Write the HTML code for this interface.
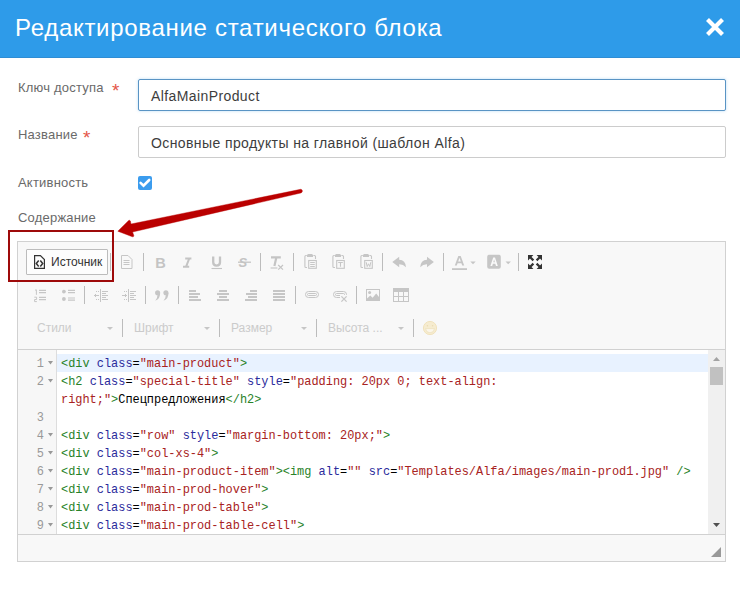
<!DOCTYPE html>
<html><head><meta charset="utf-8">
<style>
*{box-sizing:border-box}
html,body{margin:0;padding:0;width:740px;height:597px;overflow:hidden;background:#fff;font-family:"Liberation Sans",sans-serif;position:relative}
.abs{position:absolute}
#hdr{left:0;top:0;width:740px;height:58px;background:#2e9be9;border-bottom:1px solid #2f8dd4}
#title{left:15px;top:0;height:58px;line-height:56px;color:#fff;font-size:24px;letter-spacing:0.7px;white-space:nowrap}
.lbl{left:18px;color:#6a6a6a;font-size:13px;letter-spacing:0.2px;white-space:nowrap;line-height:16px}
.star{color:#e45549;font-size:19px;line-height:20px}
.inp{left:138px;width:588px;height:32px;border:1px solid #ccc;border-radius:2px;background:#fff}
.inp span{position:absolute;left:12px;top:1px;line-height:30px;font-size:14px;color:#3d3d3d;letter-spacing:0.4px;white-space:nowrap}
#ed{left:17px;top:241px;width:709px;height:321px;border:1px solid #d1d1d1;background:#f8f8f8}
#code{left:17px;top:349px;width:709px;height:186px;background:#fff;border:1px solid #d1d1d1;border-top-color:#d1d1d1}
#gut{left:18px;top:350px;width:39px;height:184px;background:#f7f7f7;border-right:1px solid #ddd}
#hl{left:57px;top:354px;width:651px;height:18px;background:#e8f2ff}
#sb{left:708px;top:350px;width:17px;height:184px;background:#f0f0f0}
.ln{position:absolute;left:18px;width:26px;text-align:right;font:11.93px "Liberation Mono",monospace;color:#999;line-height:18px;padding-top:1px}
.cl{position:absolute;left:61px;font:11.93px "Liberation Mono",monospace;line-height:18px;white-space:pre;color:#000;padding-top:1px}
.t{color:#288228}.a{color:#2b2b9c}.s{color:#a82222}
.btn{left:26px;top:249px;width:82px;height:26px;border:1px solid #bcbcbc;background:#fdfdfd;border-radius:1px}
.btxt{left:51px;top:255px;font-size:12px;color:#333;line-height:14px;white-space:nowrap}
.cmb{font-size:12px;color:#cbcbcb;line-height:14px;white-space:nowrap;top:321px}
#redbox{left:8px;top:230px;width:106px;height:52px;border:2px solid #9e0a0a}
</style></head><body>
<div id="hdr" class="abs"></div>
<div id="title" class="abs">Редактирование статического блока</div>
<svg class="abs" style="left:706px;top:18px" width="18" height="18" viewBox="0 0 18 18"><path d="M1.5 1.5L16.5 16.5M16.5 1.5L1.5 16.5" stroke="#fff" stroke-width="4.2"/></svg>

<div class="abs lbl" style="top:80px">Ключ доступа</div><div class="abs star" style="left:112px;top:80.5px">*</div>
<div class="abs inp" style="top:79px;border-color:#5a94c4;box-shadow:0 0 3px rgba(102,175,233,0.45)"><span>AlfaMainProduct</span></div>
<div class="abs lbl" style="top:127px">Название</div><div class="abs star" style="left:83px;top:128px">*</div>
<div class="abs inp" style="top:126px"><span>Основные продукты на главной (шаблон Alfa)</span></div>
<div class="abs lbl" style="top:175px">Активность</div>
<div class="abs" style="left:138px;top:176px;width:14px;height:14px;border-radius:2px;background:#3b9cee"></div>
<svg class="abs" style="left:138px;top:176px" width="14" height="14"><path d="M2.6 6.9L5.5 9.6L11.2 4" stroke="#fff" stroke-width="2.6" stroke-linecap="round" fill="none"/></svg>
<div class="abs lbl" style="top:210px">Содержание</div>

<div id="ed" class="abs"></div>
<div class="abs btn"></div>
<div class="abs btxt">Источник</div>
<div class="abs cmb" style="left:37px">Стили</div>
<div class="abs cmb" style="left:134px">Шрифт</div>
<div class="abs cmb" style="left:231px">Размер</div>
<div class="abs cmb" style="left:328px">Высота ...</div>

<svg class="abs" style="left:0;top:0" width="740" height="597">
<g stroke="#bcbcbc" stroke-width="1">
<path d="M110.5 253V271M143.5 253V271M260.5 253V271M293.5 253V271M382.5 253V271M443.5 253V271M518.5 253V271"/>
<path d="M84.5 286V304M145.5 286V304M178.5 286V304M295.5 286V304M356.5 286V304"/>
<path d="M122.5 319V337M219.5 319V337M316.5 319V337M413.5 319V337"/>
</g>
<!-- source icon -->
<g fill="none" stroke="#333">
<path d="M34.6 255.6H40.4L44.4 259.6V268.4H34.6Z" stroke-width="1.2"/>
<path d="M38.7 260.6L36.3 263.5L38.7 266.4M40.3 260.6L42.7 263.5L40.3 266.4" stroke-width="1.5"/>
</g>
<!-- maximize -->
<g fill="#333">
<path d="M528 255H533.4L528 260.4Z"/><path d="M542 255H536.6L542 260.4Z"/><path d="M528 269H533.4L528 263.6Z"/><path d="M542 269H536.6L542 263.6Z"/>
</g>
<g stroke="#333" stroke-width="2.2" fill="none">
<path d="M530 257L533.4 260.4M540 257L536.6 260.4M530 267L533.4 263.6M540 267L536.6 263.6"/>
</g>
<!-- disabled icons -->
<g fill="none" stroke="#c6c6c6" stroke-width="1">
<path d="M121.5 255.5H128L132 259.5V268.5H121.5Z"/>
<path d="M123.5 260.5H129.5M123.5 262.5H129.5M123.5 264.5H129.5"/>
</g>
<g fill="#c4c4c4">
<text x="155.2" y="268" font-family="Liberation Sans" font-weight="bold" font-size="14.6">B</text>
</g>
<g fill="none" stroke="#c4c4c4" stroke-width="2">
<path d="M185.2 258.6H191.4M183 266.8H189.2M189.2 258.6L186 266.8"/>
<path d="M213.2 256.4V262.3Q213.2 265.6 216.6 265.6Q220 265.6 220 262.3V256.4" stroke-width="2.3"/>
<path d="M211.5 268.5H222" stroke-width="1.1"/>
<path d="M271 257.3H280.8M276.4 257.3L274.4 266" stroke-width="2.2"/>
<path d="M270.6 268H277.4" stroke-width="1.1"/>
<path d="M278.2 265L283 269.6M283 265L278.2 269.6" stroke-width="1.2"/>
<path d="M238 262.2H251" stroke-width="1.3"/>
</g>
<g fill="#c4c4c4"><text x="238.6" y="266.6" font-family="Liberation Sans" font-weight="bold" font-style="italic" font-size="13">S</text></g>
<!-- paste -->
<g id="p1" fill="none" stroke="#c6c6c6" stroke-width="1.1">
<path d="M306.8 255.5H305.9Q304.9 255.5 304.9 256.5V266.5Q304.9 267.5 305.9 267.5H307"/>
<path d="M313.4 255.5H314.5Q315.5 255.5 315.5 256.5V259"/>
<rect x="308.7" y="260.5" width="7.6" height="7.8"/>
<path d="M308 254H312L313 255V257H307V255Z" fill="#c6c6c6" stroke="none"/>
</g>
<path d="M310.2 262.5H314.8M310.2 264.5H314.8M310.2 266.5H314.8" stroke="#c6c6c6" stroke-width="1"/>
<use href="#p1" x="28"/>
<path d="M338.2 262.5H342.8M340.5 262.5V266.8" stroke="#c6c6c6" stroke-width="1.1" fill="none"/>
<use href="#p1" x="56"/>
<path d="M366.2 262.2L367.2 266.6L368.5 263.8L369.8 266.6L370.8 262.2" stroke="#c6c6c6" stroke-width="1" fill="none"/>
<!-- undo/redo -->
<path id="undo" d="M392.3 262L399.2 256.8V259.7Q405.6 260 406 267.2Q403.2 264.2 399.2 264.3V267.2Z" fill="#c6c6c6"/>
<use href="#undo" transform="translate(826.2 0) scale(-1 1)"/>
<!-- text color -->
<path d="M454.8 265.6L458.3 256H460.7L464.2 265.6H462.2L461.4 263.2H457.6L456.8 265.6ZM458.2 261.4H460.8L459.5 257.8Z" fill="#c6c6c6" fill-rule="evenodd"/>
<rect x="452" y="268.2" width="15" height="1.8" fill="#c6c6c6"/>
<path d="M470.3 261.5H475.7L473 264.2Z" fill="#c6c6c6"/>
<rect x="487.2" y="254.7" width="13.6" height="14" rx="2" fill="#c6c6c6"/>
<path d="M490.4 266L493.2 257.4H495L497.8 266H496L495.3 263.8H492.9L492.2 266ZM493.3 262.3H494.9L494.1 259.5Z" fill="#fafafa" fill-rule="evenodd"/>
<path d="M505.5 261.5H510.9L508.2 264.2Z" fill="#c6c6c6"/>
<!-- row2 -->
<g stroke="#c6c6c6" stroke-width="1.2" fill="none">
<path d="M39 290.4H46M39 292.6H46M39 297.4H46M39 299.7H46"/>
<path d="M68 290.4H75M68 292.6H75M68 298H75M68 300.2H75"/>
<path d="M35 290.2L36.4 289.8V294.8M34.3 297.2H36.6V299.5H34.6V301.6H36.9" stroke-width="1"/>
</g>
<g fill="#c6c6c6"><circle cx="63.9" cy="291.6" r="1.9"/><circle cx="63.9" cy="299" r="1.9"/></g>
<g fill="#c6c6c6">
<rect x="100" y="289" width="1" height="13"/>
<rect x="102" y="291" width="6" height="1"/><rect x="102" y="293" width="4" height="1"/><rect x="102" y="295" width="6" height="1"/><rect x="102" y="297" width="4" height="1"/><rect x="102" y="299" width="6" height="1"/>
<rect x="94" y="295" width="5" height="1"/><rect x="95" y="294" width="1" height="3"/>
<rect x="96" y="291" width="1" height="1"/><rect x="98" y="291" width="1" height="1"/><rect x="96" y="299" width="1" height="1"/><rect x="98" y="299" width="1" height="1"/>
<rect x="128" y="289" width="1" height="13"/>
<rect x="130" y="291" width="6" height="1"/><rect x="130" y="293" width="4" height="1"/><rect x="130" y="295" width="6" height="1"/><rect x="130" y="297" width="4" height="1"/><rect x="130" y="299" width="6" height="1"/>
<rect x="122" y="295" width="5" height="1"/><rect x="125" y="294" width="1" height="3"/>
<rect x="124" y="291" width="1" height="1"/><rect x="126" y="291" width="1" height="1"/><rect x="124" y="299" width="1" height="1"/><rect x="126" y="299" width="1" height="1"/>
<circle cx="157.6" cy="292.7" r="2.55"/><path d="M160.1 292.8Q160.6 298.6 155.2 300.8Q157.6 298.2 157.4 295.2Z"/>
<circle cx="165.9" cy="292.7" r="2.55"/><path d="M168.4 292.8Q168.9 298.6 163.5 300.8Q165.9 298.2 165.7 295.2Z"/>
<rect x="189" y="290" width="7" height="2"/><rect x="189" y="293" width="11" height="2"/><rect x="189" y="296" width="9" height="2"/><rect x="189" y="299" width="12" height="2"/>
<rect x="219" y="290" width="8" height="2"/><rect x="217" y="293" width="12" height="2"/><rect x="219" y="296" width="8" height="2"/><rect x="217" y="299" width="12" height="2"/>
<rect x="250" y="290" width="7" height="2"/><rect x="246" y="293" width="11" height="2"/><rect x="248" y="296" width="9" height="2"/><rect x="245" y="299" width="12" height="2"/>
<rect x="273" y="290" width="12" height="2"/><rect x="273" y="293" width="12" height="2"/><rect x="273" y="296" width="12" height="2"/><rect x="273" y="299" width="12" height="2"/>
</g>
<g stroke="#c6c6c6" stroke-width="1" fill="none">
<rect x="305.5" y="291.5" width="13" height="6" rx="3"/>
<rect x="307.5" y="293.5" width="9" height="2" rx="1"/>
<rect x="333.5" y="291.5" width="13" height="6" rx="3"/>
<rect x="335.5" y="293.5" width="9" height="2" rx="1"/>
</g>
<rect x="340" y="295" width="8" height="7" fill="#f8f8f8"/>
<path d="M341.4 296.4L346.6 301.6M346.6 296.4L341.4 301.6" stroke="#c6c6c6" stroke-width="1.3"/>
<g fill="none" stroke="#c6c6c6" stroke-width="1">
<rect x="366.5" y="289.5" width="13" height="11"/>
</g>
<g fill="#c6c6c6">
<circle cx="369.6" cy="292.5" r="1.5"/>
<path d="M367 300V298.6L370.3 295.6L372.6 297.8L376.2 293.6L379 297V300Z"/>
<path d="M393 288H409V302H393ZM394 292V296H398V292ZM399 292V296H403V292ZM404 292V296H408V292ZM394 297V301H398V297ZM399 297V301H403V297ZM404 297V301H408V297Z" fill-rule="evenodd"/>
</g>
<!-- combo arrows -->
<g fill="#c6c6c6"><path d="M107 327H113L110 330Z"/><path d="M204 327H210L207 330Z"/><path d="M301 327H307L304 330Z"/><path d="M398 327H404L401 330Z"/></g>
<!-- smiley -->
<circle cx="430" cy="328" r="6.6" fill="#f6ecd0" stroke="#efe0b8" stroke-width="0.9"/>
<circle cx="427.4" cy="325.8" r="0.8" fill="#eadcb4"/><circle cx="432.6" cy="325.8" r="0.8" fill="#eadcb4"/>
<path d="M425.5 328.6H434.5Q434 332.6 430 332.8Q426 332.6 425.5 328.6Z" fill="#fbf6ea" stroke="#eadcb4" stroke-width="0.6"/>
</svg>

<div id="code" class="abs"></div>
<div id="gut" class="abs"></div>
<div id="hl" class="abs"></div>
<div id="sb" class="abs"></div>
<div class="ln" style="top:354px">1</div>
<div class="ln" style="top:372px">2</div>
<div class="ln" style="top:408px">3</div>
<div class="ln" style="top:426px">4</div>
<div class="ln" style="top:444px">5</div>
<div class="ln" style="top:462px">6</div>
<div class="ln" style="top:480px">7</div>
<div class="ln" style="top:498px">8</div>
<div class="ln" style="top:516px">9</div>
<div class="cl" style="top:354px"><span class="t">&lt;div</span> <span class="a">class</span>=<span class="s">"main-product"</span><span class="t">&gt;</span></div>
<div class="cl" style="top:372px"><span class="t">&lt;h2</span> <span class="a">class</span>=<span class="s">"special-title"</span> <span class="a">style</span>=<span class="s">"padding: 20px 0; text-align:</span></div>
<div class="cl" style="top:390px"><span class="s">right;"</span><span class="t">&gt;</span>Спецпредложения<span class="t">&lt;/h2&gt;</span></div>
<div class="cl" style="top:426px"><span class="t">&lt;div</span> <span class="a">class</span>=<span class="s">"row"</span> <span class="a">style</span>=<span class="s">"margin-bottom: 20px;"</span><span class="t">&gt;</span></div>
<div class="cl" style="top:444px"><span class="t">&lt;div</span> <span class="a">class</span>=<span class="s">"col-xs-4"</span><span class="t">&gt;</span></div>
<div class="cl" style="top:462px"><span class="t">&lt;div</span> <span class="a">class</span>=<span class="s">"main-product-item"</span><span class="t">&gt;&lt;img</span> <span class="a">alt</span>=<span class="s">""</span> <span class="a">src</span>=<span class="s">"Templates/Alfa/images/main-prod1.jpg"</span> <span class="t">/&gt;</span></div>
<div class="cl" style="top:480px"><span class="t">&lt;div</span> <span class="a">class</span>=<span class="s">"main-prod-hover"</span><span class="t">&gt;</span></div>
<div class="cl" style="top:498px"><span class="t">&lt;div</span> <span class="a">class</span>=<span class="s">"main-prod-table"</span><span class="t">&gt;</span></div>
<div class="cl" style="top:516px"><span class="t">&lt;div</span> <span class="a">class</span>=<span class="s">"main-prod-table-cell"</span><span class="t">&gt;</span></div>

<svg class="abs" style="left:0;top:0" width="740" height="597">
<!-- gutter fold markers -->
<g fill="#999">
<path d="M48 361h5l-2.5 3.5z"/><path d="M48 379h5l-2.5 3.5z"/><path d="M48 433h5l-2.5 3.5z"/><path d="M48 451h5l-2.5 3.5z"/><path d="M48 469h5l-2.5 3.5z"/><path d="M48 487h5l-2.5 3.5z"/><path d="M48 505h5l-2.5 3.5z"/><path d="M48 523h5l-2.5 3.5z"/>
</g>
<!-- scrollbar -->
<path d="M713 361h7l-3.5-4z" fill="#a3a3a3"/>
<rect x="710" y="367" width="13" height="18" fill="#c1c1c1"/>
<path d="M713 523h7l-3.5 4z" fill="#505050"/>
<!-- resize grip -->
<path d="M721 547v10h-10z" fill="#999"/>
<!-- red arrow -->
<path d="M117.8 231.2 L128.6 220.6 Q129.8 219.8 130.4 221 L131 224 L300.6 189.3 Q302.6 189.6 302.4 191.2 Q302 192.6 300.8 193 L132.6 232 L133.8 235.4 Q134 237 132.4 236.8 Z" fill="#ba0000" stroke="#ba0000" stroke-width="0.4" stroke-linejoin="round"/>
</svg>
<div id="redbox" class="abs"></div>
</body></html>
